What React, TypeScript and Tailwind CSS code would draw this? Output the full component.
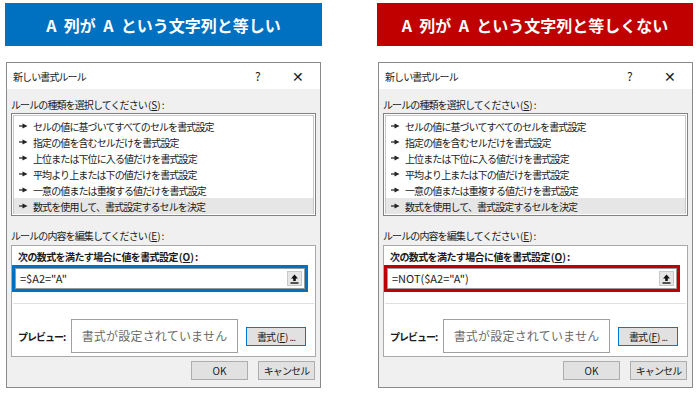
const FONT = { fontFamily: '"Noto Sans CJK JP", "Noto Sans", sans-serif' };

const rules = [
  "セルの値に基づいてすべてのセルを書式設定",
  "指定の値を含むセルだけを書式設定",
  "上位または下位に入る値だけを書式設定",
  "平均より上または下の値だけを書式設定",
  "一意の値または重複する値だけを書式設定",
  "数式を使用して、書式設定するセルを決定",
];

const Marker = () => (
  <svg width="9" height="6" viewBox="0 0 9 6" className="shrink-0">
    <path d="M0 3h4" stroke="#222" strokeWidth="1.2" />
    <path d="M3.5 0.5L8.5 3L3.5 5.5Z" fill="#222" />
  </svg>
);

const UploadIcon = () => (
  <svg width="9" height="10" viewBox="0 0 9 10">
    <path d="M4.5 0.5L8 4.5H5.8V7H3.2V4.5H1Z" fill="#111" />
    <path d="M0.5 9h8" stroke="#111" strokeWidth="1.4" />
  </svg>
);

// accelerator key, e.g. (S)
const Key = ({ k }: { k: string }) => (
  <span className="tracking-normal px-[1px]">
    (<span className="underline">{k}</span>)
  </span>
);

type DialogProps = { formula: string; accent: string };

const Dialog = ({ formula, accent }: DialogProps) => {
  const ui = "text-[10px] tracking-[-0.9px] whitespace-nowrap";
  return (
    <div className="w-[315px] h-[326px] border border-[#8a8a8a] bg-[#f0f0f0] flex flex-col text-[#1a1a1a]">
      {/* title bar */}
      <div className="h-[26px] bg-white flex items-center pl-[6px] pr-[16px]">
        <span className={"flex-1 " + ui}>新しい書式ルール</span>
        <span className="w-[37px] text-[12px]">?</span>
        <span className="text-[14px] font-light leading-none">✕</span>
      </div>

      <div className="px-[4px] flex flex-col">
        <div className={"h-[16px] mt-[8px] leading-[16px] " + ui}>
          ルールの種類を選択してください<Key k="S" />:
        </div>
        <div className="h-[103px] border border-[#828282] bg-white p-[1px]">
          <div className="h-full border border-[#c8c8c8] pt-[2px]">
            {rules.map((r, i) => (
              <div
                key={r}
                className={
                  "h-[16px] flex items-center gap-[5px] pl-[5px] " +
                  ui +
                  (i === rules.length - 1 ? " bg-[#e6e6e6]" : "")
                }
              >
                <Marker />
                <span>{r}</span>
              </div>
            ))}
          </div>
        </div>

        <div className={"h-[16px] mt-[12px] mb-[1px] leading-[16px] " + ui}>
          ルールの内容を編集してください<Key k="E" />:
        </div>
        <div className="h-[112px] border border-[#a9a9a9] bg-white flex flex-col">
          <div className="h-[16px] mt-[3px] pl-[6px] text-[10px] tracking-[-0.6px] font-bold leading-[16px] whitespace-nowrap">
            次の数式を満たす場合に値を書式設定<Key k="O" />:
          </div>
          <div className={"h-[27px] w-[296px] border-[3px] bg-white flex items-center " + accent}>
            <div className="flex-1 h-full border border-[#9a9a9a] flex items-center pl-[4px] pr-[2px] text-[11px]">
              <span className="flex-1">{formula}</span>
              <span className="w-[15px] h-[15px] bg-[#e6e6e6] border border-[#c8c8c8] flex items-center justify-center">
                <UploadIcon />
              </span>
            </div>
          </div>
          <div className="mt-[11px] mx-[1px] border-t border-[#e0e0e0]" />
          <div className="flex items-center mt-[15px] pl-[6px]">
            <span className="w-[53px] text-[10px] tracking-[-1px] font-bold whitespace-nowrap">プレビュー:</span>
            <div className="w-[167px] h-[34px] border border-[#a0a0a0] bg-white flex items-center justify-center text-[12px] text-[#6a6a6a] tracking-[0.2px]">
              書式が設定されていません
            </div>
            <div className={"ml-[8px] w-[60px] h-[19px] border border-[#0078d7] bg-[#e1e1e1] flex items-center justify-center " + ui}>
              書式<Key k="F" />...
            </div>
          </div>
        </div>

        <div className="flex justify-end gap-[10px] mt-[4px] pr-[1px]">
          <div className="w-[57px] h-[19px] border border-[#adadad] bg-[#e1e1e1] flex items-center justify-center text-[10px]">
            OK
          </div>
          <div className={"w-[57px] h-[19px] border border-[#adadad] bg-[#e1e1e1] flex items-center justify-center " + ui}>
            キャンセル
          </div>
        </div>
      </div>
    </div>
  );
};

export default function App() {
  return (
    <div className="w-[700px] h-[394px] bg-white flex" style={FONT}>
      <div className="ml-[5px] mt-[3px] flex flex-col">
        <div className="w-[317px] h-[43px] bg-[#0070c0] text-white text-[16px] font-bold flex items-center justify-center whitespace-pre">
          A  列が  A  という文字列と等しい
        </div>
        <div className="mt-[16px] ml-[1px]">
          <Dialog formula={'=$A2="A"'} accent="border-[#0070c0]" />
        </div>
      </div>
      <div className="ml-[55px] mt-[3px] flex flex-col">
        <div className="w-[316px] h-[43px] bg-[#c00000] text-white text-[16px] font-bold flex items-center justify-center whitespace-pre">
          A  列が  A  という文字列と等しくない
        </div>
        <div className="mt-[16px] ml-[1px]">
          <Dialog formula={'=NOT($A2="A")'} accent="border-[#c00000]" />
        </div>
      </div>
    </div>
  );
}
